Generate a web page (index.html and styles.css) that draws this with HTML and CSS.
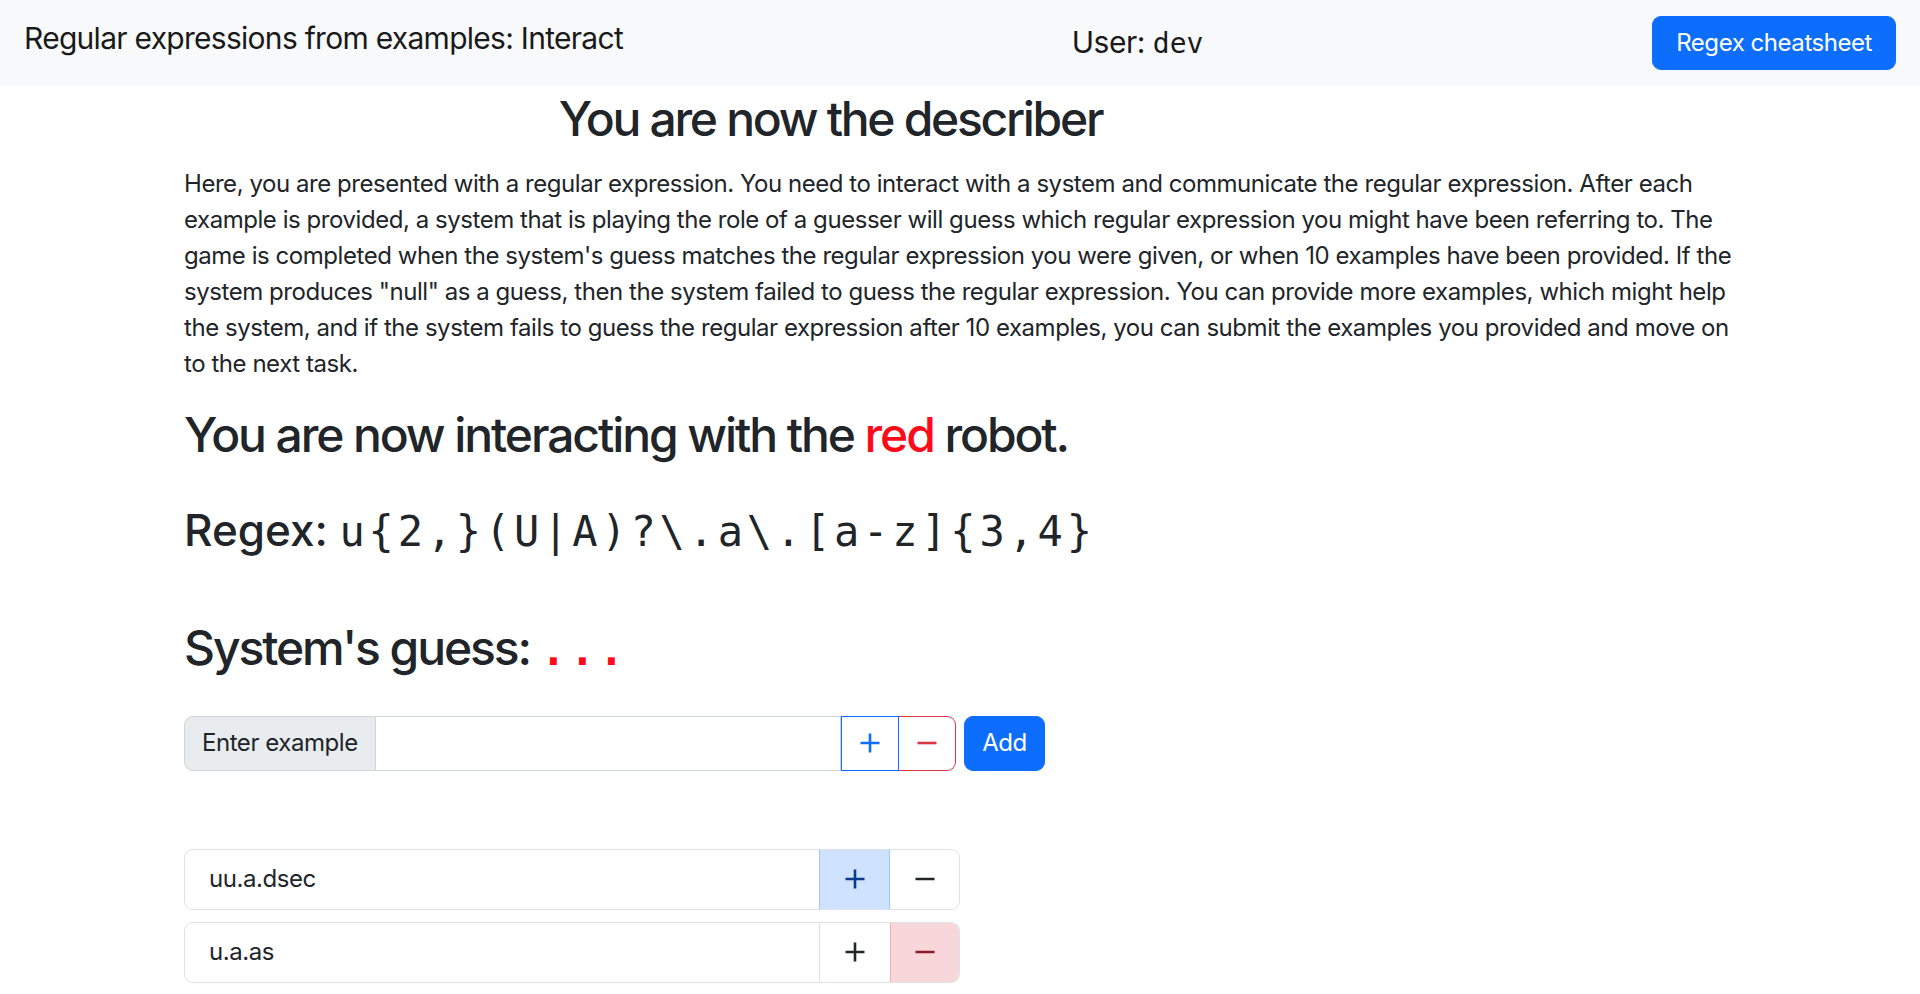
FILE: index.html
```html
<!DOCTYPE html>
<html lang="en">
<head>
<meta charset="utf-8">
<title>Regular expressions from examples: Interact</title>
<link rel="stylesheet" href="styles.css">
</head>
<body>
<nav class="navbar">
  <span class="brand">Regular expressions from examples: Interact</span>
  <span class="user">User: <span class="user-name">dev</span></span>
  <button class="btn btn-primary cheat">Regex cheatsheet</button>
</nav>
<main class="container">
  <div class="intro-head"><h2 class="title">You are now the describer</h2></div>
  <p class="desc">Here, you are presented with a regular expression. You need to interact with a system and communicate the regular expression. After each example is provided, a system that is playing the role of a guesser will guess which regular expression you might have been referring to. The game is completed when the system's guess matches the regular expression you were given, or when 10 examples have been provided. If the system produces "null" as a guess, then the system failed to guess the regular expression. You can provide more examples, which might help the system, and if the system fails to guess the regular expression after 10 examples, you can submit the examples you provided and move on to the next task.</p>
  <h2 class="robot">You are now interacting with the <span class="red">red</span> robot.</h2>
  <h3 class="regex">Regex: <span class="code">u{2,}(U|A)?\.a\.[a-z]{3,4}</span></h3>
  <h2 class="guess">System's guess: <span class="code dots">...</span></h2>
  <div class="entry">
    <div class="input-group">
      <span class="addon">Enter example</span>
      <input class="field" type="text" aria-label="Enter example">
      <button class="sign sign-plus" aria-label="positive"><svg width="22" height="22" viewBox="0 0 22 22"><path d="M11 1.5v19M1.5 11h19" stroke="currentColor" stroke-width="2.6" fill="none"/></svg></button>
      <button class="sign sign-minus" aria-label="negative"><svg width="22" height="22" viewBox="0 0 22 22"><path d="M1.5 11h19" stroke="currentColor" stroke-width="2.6" fill="none"/></svg></button>
    </div>
    <button class="btn btn-primary add">Add</button>
  </div>
  <ul class="examples">
    <li class="ex">
      <span class="ex-text">uu.a.dsec</span>
      <span class="cell cell-plus on-plus"><svg width="22" height="22" viewBox="0 0 22 22"><path d="M11 1.5v19M1.5 11h19" stroke="currentColor" stroke-width="2.6" fill="none"/></svg></span>
      <span class="cell cell-minus"><svg width="22" height="22" viewBox="0 0 22 22"><path d="M1.5 11h19" stroke="currentColor" stroke-width="2.6" fill="none"/></svg></span>
    </li>
    <li class="ex">
      <span class="ex-text">u.a.as</span>
      <span class="cell cell-plus"><svg width="22" height="22" viewBox="0 0 22 22"><path d="M11 1.5v19M1.5 11h19" stroke="currentColor" stroke-width="2.6" fill="none"/></svg></span>
      <span class="cell cell-minus on-minus"><svg width="22" height="22" viewBox="0 0 22 22"><path d="M1.5 11h19" stroke="currentColor" stroke-width="2.6" fill="none"/></svg></span>
    </li>
  </ul>
</main>
</body>
</html>
```

FILE: styles.css
```css
* { box-sizing: border-box; }
html, body { margin: 0; padding: 0; }
body {
  font-family: Inter, "Noto Sans", "Liberation Sans", sans-serif;
  font-size: 24px;
  line-height: 36px;
  letter-spacing: -0.45px;
  color: #212529;
  background: #fff;
  overflow: hidden;
}

.navbar {
  height: 86px;
  padding: 0 24px;
  background: #f8f9fa;
  display: flex;
  align-items: center;
  justify-content: space-between;
}
.brand {
  font-size: 30px;
  line-height: 45px;
  letter-spacing: -0.72px;
  color: #1a1a1a;
  margin-bottom: 10px;
}
.user {
  font-size: 30px;
  line-height: 45px;
  letter-spacing: -0.5px;
  color: #1a1a1a;
}
.user-name {
  font-family: "DejaVu Sans Mono", monospace;
  font-size: 28px;
  letter-spacing: 0;
}

.btn {
  font-family: inherit;
  font-size: 24px;
  line-height: 36px;
  letter-spacing: -0.45px;
  border: 1px solid transparent;
  border-radius: 9px;
  cursor: pointer;
}
.btn-primary {
  background: #0d6efd;
  border-color: #0d6efd;
  color: #fff;
}
.cheat {
  height: 54px;
  padding: 0 23px;
}

.container {
  width: 1552px;
  margin: 0 auto;
}
.intro-head {
  width: 1293px;
  text-align: center;
}
h2, h3 {
  font-weight: 500;
  margin: 0;
}
h2 { font-size: 48px; line-height: 57.6px; letter-spacing: -2.1px; }
h3 { font-size: 44px; line-height: 50.4px; letter-spacing: 0; }

.title { padding-top: 4px; margin-bottom: 18.5px; letter-spacing: -2.3px; }
.desc { margin: 0 0 23.5px; width: calc(100% + 12px); }
.robot { margin-bottom: 42px; }
.red { color: #ff0a1a; }
.regex { margin-bottom: 61px; }
.code {
  font-family: "DejaVu Sans Mono", monospace;
  font-size: 42px;
  font-weight: 400;
  letter-spacing: 3.8px;
}
.dots { color: #ff0a1a; font-weight: 700; }
.guess { margin-bottom: 36.5px; }

.entry {
  display: flex;
  align-items: stretch;
  gap: 8px;
}
.input-group {
  display: flex;
  width: 772px;
  height: 55px;
}
.addon {
  display: flex;
  align-items: center;
  padding: 0 17px;
  background: #e9ecef;
  border: 1px solid #ced4da;
  border-radius: 9px 0 0 9px;
  white-space: nowrap;
}
.field {
  flex: 1;
  min-width: 0;
  border: 1px solid #ced4da;
  border-left: 0;
  font: inherit;
  padding: 0 18px;
  outline: none;
}
.sign {
  width: 58px;
  display: flex;
  align-items: center;
  justify-content: center;
  background: #fff;
  padding: 0;
  cursor: pointer;
}
.sign-plus {
  border: 1px solid #0d6efd;
  color: #0d6efd;
}
.sign-minus {
  border: 1px solid #dc3545;
  border-left: 0;
  color: #dc3545;
  border-radius: 0 9px 9px 0;
  width: 57px;
}
.add {
  width: 81px;
  height: 55px;
  padding: 0;
}

.examples {
  list-style: none;
  margin: 78px 0 0;
  padding: 0;
  width: 776px;
  display: flex;
  flex-direction: column;
  gap: 12px;
}
.ex {
  display: flex;
  height: 61px;
  border: 1px solid #dee2e6;
  border-radius: 9px;
  overflow: hidden;
}
.ex-text {
  flex: 1;
  display: flex;
  align-items: center;
  padding: 0 24px;
}
.cell {
  width: 71px;
  display: flex;
  align-items: center;
  justify-content: center;
  border-left: 1px solid #dee2e6;
  color: #212529;
}
.cell-minus { width: 69px; }
.on-plus {
  background: #cfe2ff;
  color: #0a3a8a;
  border-left-color: #9ec5fe;
  border-right: 1px solid #9ec5fe;
}
.on-plus + .cell { border-left: 0; }
.on-minus {
  background: #f8d7da;
  color: #8a1c27;
  border-left-color: #f1aeb5;
}
```
